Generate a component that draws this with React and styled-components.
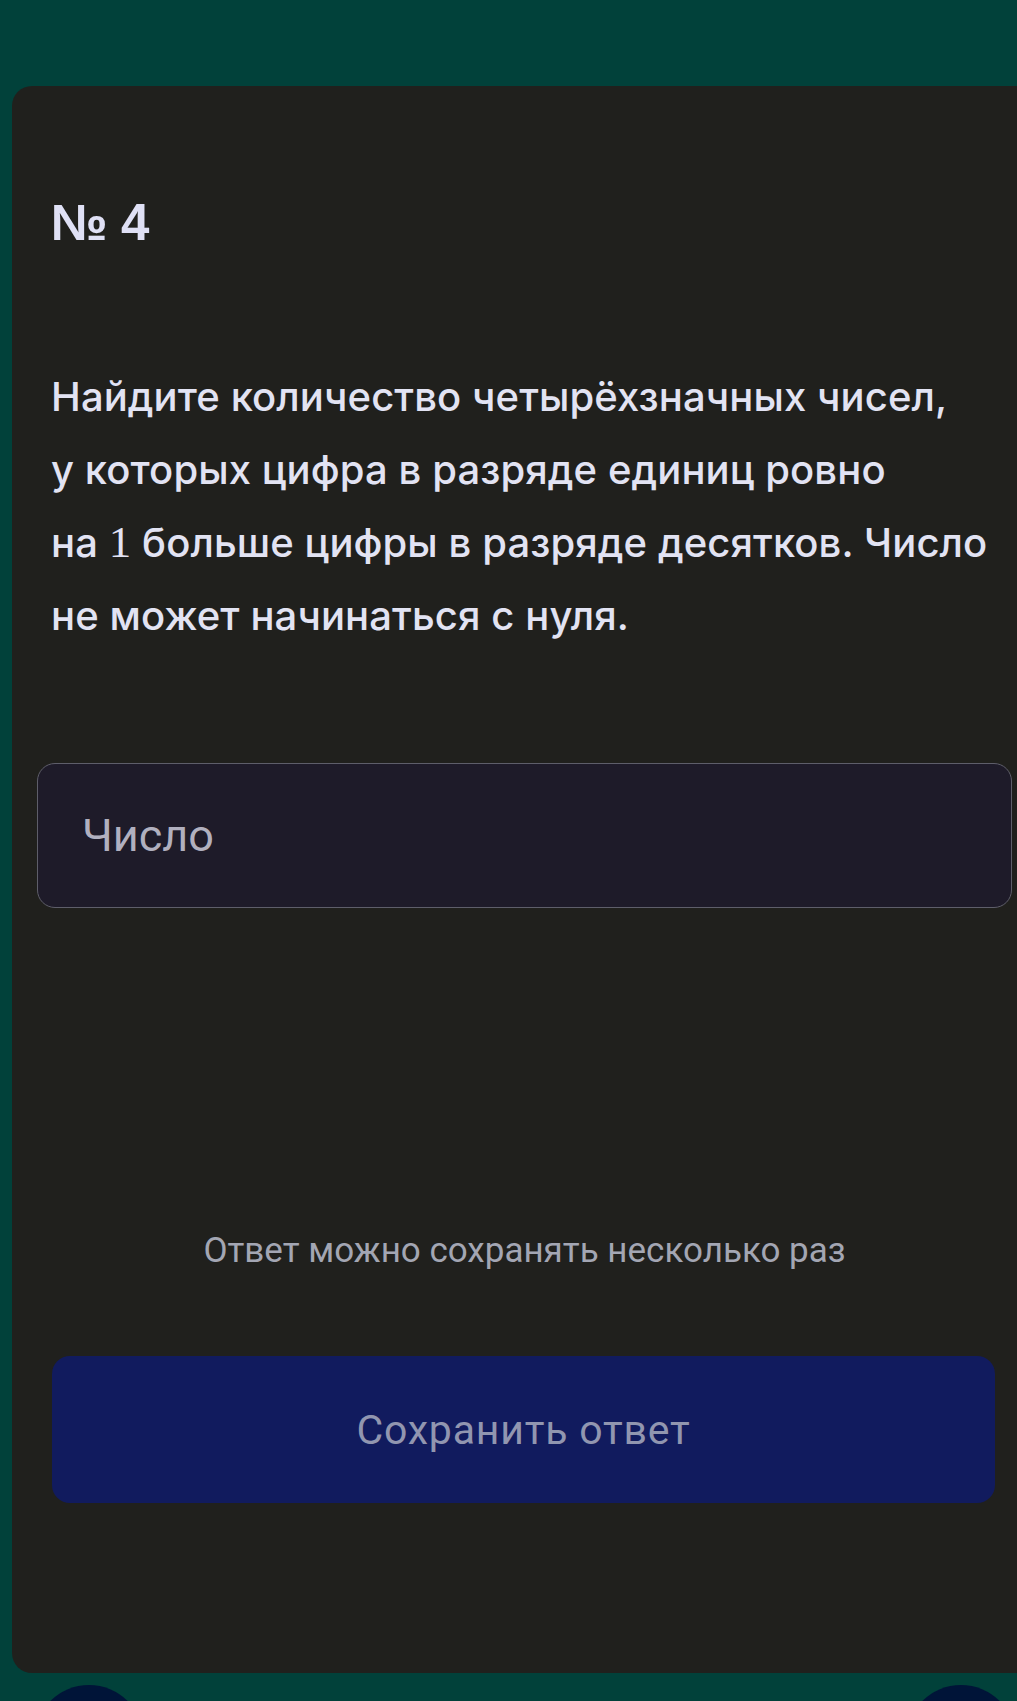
import React from "react";
import styled, { createGlobalStyle } from "styled-components";

const Global = createGlobalStyle`
  html, body { margin: 0; padding: 0; background: #01413a; }
  body { overflow: hidden; }
  * { box-sizing: border-box; }
`;

const Viewport = styled.div`
  width: 1017px;
  height: 1701px;
  overflow: hidden;
  background: #01413a;
`;

const Frame = styled.div`
  width: 1050px;
  padding-top: 86px;
  display: flex;
  flex-direction: column;
`;

const Card = styled.section`
  margin: 0 12px;
  background: #20201d;
  border-radius: 20px;
  padding: 107px 40px 170px 39px;
  display: flex;
  flex-direction: column;
`;

const Title = styled.h2`
  margin: 0;
  font-family: "Liberation Sans", Arial, sans-serif;
  font-weight: 700;
  font-size: 51px;
  line-height: 60px;
  letter-spacing: -0.5px;
  color: #dfe0f5;
`;

const Question = styled.p`
  margin: 107px 0 0;
  font-family: Inter, "Noto Sans", sans-serif;
  font-weight: 500;
  font-size: 40px;
  line-height: 73px;
  letter-spacing: 0.1px;
  white-space: nowrap;
  color: #e2e3f3;
`;

const Digit = styled.span`
  font-family: "Liberation Serif", "Times New Roman", serif;
  font-weight: 400;
  font-size: 45px;
`;

const Field = styled.input`
  margin: 111px -14px 0 -14px;
  height: 145px;
  padding: 0 0 0 44px;
  background: #1e1b29;
  border: 1.5px solid #5e5e6a;
  border-radius: 18px;
  font-family: Roboto, "Noto Sans", sans-serif;
  font-size: 45px;
  font-weight: 400;
  color: #e2e3f3;
  outline: none;
  &::placeholder { color: #b1b0bf; }
`;

const Hint = styled.p`
  margin: 323px 0 0;
  text-align: center;
  font-family: Roboto, "Noto Sans", sans-serif;
  font-size: 35px;
  line-height: 40px;
  color: #a3a6b3;
`;

const SaveButton = styled.button`
  margin: 85px 3px 0 1px;
  height: 147px;
  border: none;
  border-radius: 18px;
  background: #111b5e;
  font-family: Roboto, "Noto Sans", sans-serif;
  font-size: 41px;
  letter-spacing: 0.8px;
  color: #9196b0;
  cursor: pointer;
`;

const NavRow = styled.nav`
  margin-top: 12px;
  padding: 0 34px;
  display: flex;
  justify-content: space-between;
`;

const NavDot = styled.button`
  width: 110px;
  height: 110px;
  border-radius: 50%;
  border: none;
  background: #001438;
  padding: 0;
`;

export default function App() {
  return (
    <Viewport>
      <Global />
      <Frame>
        <Card>
          <Title>№ 4</Title>
          <Question>
            Найдите количество четырёхзначных чисел,
            <br />у которых цифра в разряде единиц ровно
            <br />на <Digit>1</Digit> больше цифры в разряде десятков. Число
            <br />не может начинаться с нуля.
          </Question>
          <Field placeholder="Число" />
          <Hint>Ответ можно сохранять несколько раз</Hint>
          <SaveButton>Сохранить ответ</SaveButton>
        </Card>
        <NavRow>
          <NavDot aria-label="Назад" />
          <NavDot aria-label="Вперёд" />
        </NavRow>
      </Frame>
    </Viewport>
  );
}
